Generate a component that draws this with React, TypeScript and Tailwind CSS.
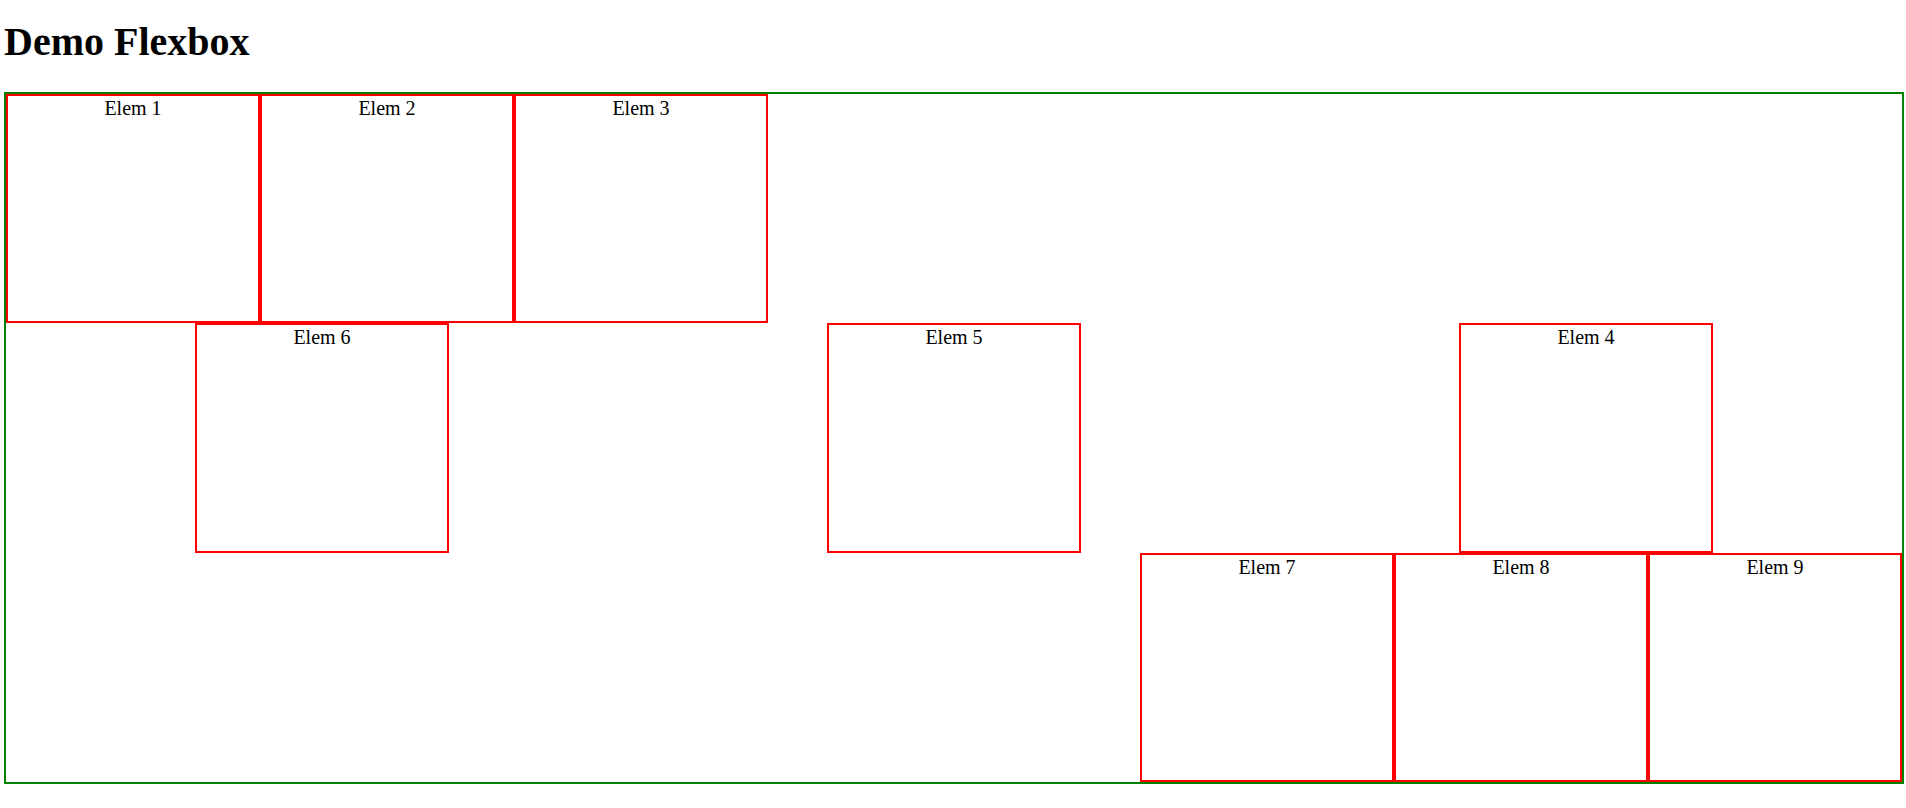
import React from "react";

function Box({ label }: { label: string }) {
  return (
    <div className="w-[254px] h-full border-2 border-[#ff0000] text-center text-[20px] leading-[23px] pt-px shrink-0">
      {label}
    </div>
  );
}

export default function App() {
  return (
    <div
      className="bg-white text-black min-h-[808px] pl-[4px] pt-[19px]"
      style={{ fontFamily: '"Liberation Serif", "Times New Roman", serif' }}
    >
      <h1 className="text-[40px] leading-[46px] font-bold m-0 mb-[27px]">Demo Flexbox</h1>
      <div className="w-[1900px] h-[692px] border-2 border-[#008000] flex flex-col">
        <div className="flex-1 flex justify-start">
          <Box label="Elem 1" />
          <Box label="Elem 2" />
          <Box label="Elem 3" />
        </div>
        <div className="flex-1 flex justify-around">
          <Box label="Elem 6" />
          <Box label="Elem 5" />
          <Box label="Elem 4" />
        </div>
        <div className="flex-1 flex justify-end">
          <Box label="Elem 7" />
          <Box label="Elem 8" />
          <Box label="Elem 9" />
        </div>
      </div>
    </div>
  );
}
